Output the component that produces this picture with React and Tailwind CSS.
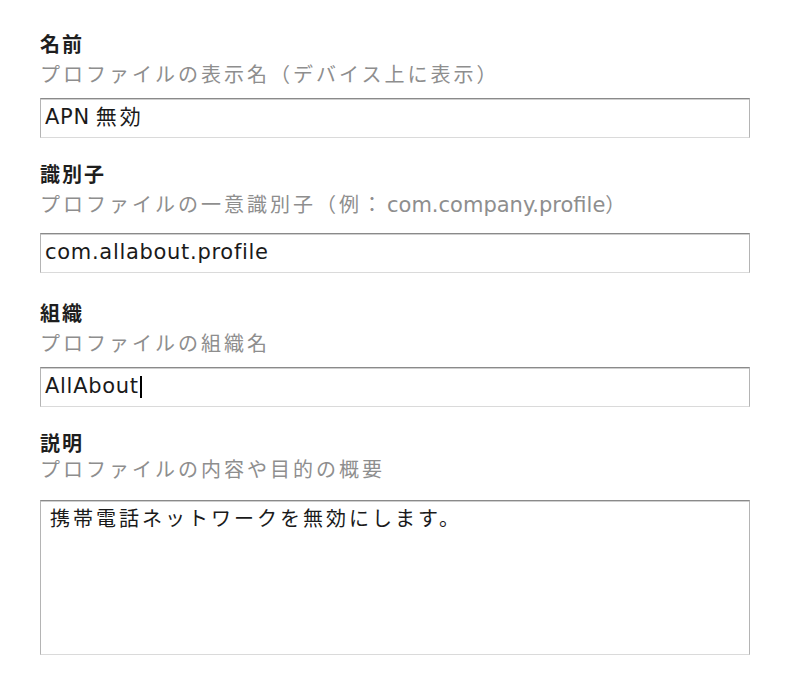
import React from "react";

const font = "font-['DejaVu_Sans','Noto_Sans_CJK_JP',sans-serif]";
const box =
  "w-[710px] border-x border-t border-b border-x-[#b4b4b4] border-t-[#8a8a8a] border-b-[#dadada] shadow-[inset_0_1px_0_#cfcfcf] bg-white";

function Field({ label, desc, children, descGap = "mt-[8px]", boxGap = "mt-[12px]" }) {
  return (
    <div>
      <div className="text-[20px] leading-[22px] font-bold tracking-[2px] text-[#1e1e1e]">{label}</div>
      <div className={`${descGap} text-[20px] leading-[22px] tracking-[3px] text-[#8e8e8e]`}>{desc}</div>
      <div className={boxGap}>{children}</div>
    </div>
  );
}

export default function App() {
  return (
    <div className={`${font} w-[800px] h-[690px] bg-white pl-[40px] pt-[34px] flex flex-col gap-[30px]`}>
      <Field label="名前" desc="プロファイルの表示名（デバイス上に表示）">
        <div className={`${box} h-[40px] flex items-center pl-[4px] text-[21px] tracking-[0.7px] text-[#1a1a1a]`}>
          APN <span className="ml-[6px] tracking-[3px]">無効</span>
        </div>
      </Field>

      <div className="-mt-[4px]">
        <Field
          label="識別子"
          boxGap="mt-[17px]"
          desc={
            <>
              プロファイルの一意識別子（例：<span className="text-[21px] tracking-normal ml-[2px]">com.company.profile</span>）
            </>
          }
        >
          <div className={`${box} h-[40px] flex items-center pl-[4px] text-[21px] tracking-[0.7px] text-[#1a1a1a]`}>
            com.allabout.profile
          </div>
        </Field>
      </div>

      <Field label="組織" desc="プロファイルの組織名">
        <div className={`${box} h-[40px] flex items-center pl-[4px] text-[21px] tracking-[0.7px] text-[#1a1a1a]`}>
          AllAbout
          <span className="inline-block w-[2px] h-[22px] bg-black ml-[1px]"></span>
        </div>
      </Field>

      <div className="-mt-[4px]">
        <Field label="説明" desc="プロファイルの内容や目的の概要" descGap="mt-[4px]" boxGap="mt-[19px]">
          <div className={`${box} h-[155px] pl-[9px] pt-[5px] text-[20px] leading-[26px] tracking-[3px] text-[#1a1a1a]`}>
            携帯電話ネットワークを無効にします。
          </div>
        </Field>
      </div>
    </div>
  );
}
